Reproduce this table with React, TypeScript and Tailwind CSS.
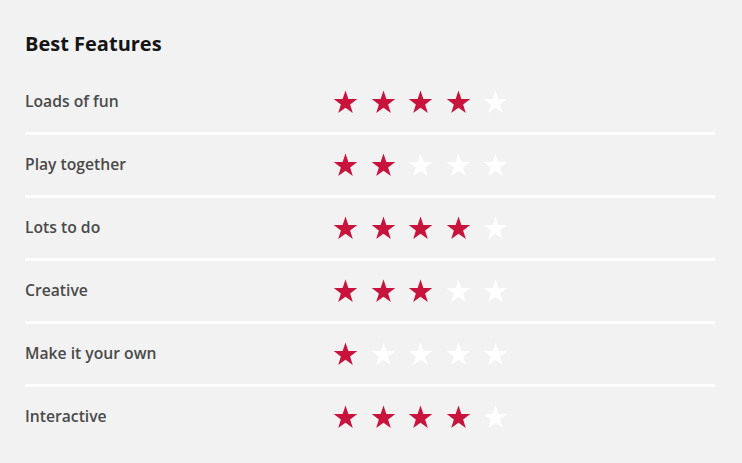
import React from "react";

const rows: [string, number][] = [
  ["Loads of fun", 4],
  ["Play together", 2],
  ["Lots to do", 4],
  ["Creative", 3],
  ["Make it your own", 1],
  ["Interactive", 4],
];

function Star({ filled }: { filled: boolean }) {
  return (
    <svg width="25" height="24" viewBox="0 0 24 23" className={filled ? "text-[#c8143c]" : "text-white"}>
      <path
        fill="currentColor"
        d="M12 0.5 L14.75 8.6 L23.3 8.7 L16.45 13.85 L19 22.1 L12 17.1 L5 22.1 L7.55 13.85 L0.7 8.7 L9.25 8.6 Z"
      />
    </svg>
  );
}

export default function App() {
  return (
    <div className="w-[742px] h-[463px] bg-[#f2f2f2] px-[25px] pt-[32px] font-['Open_Sans',sans-serif]">
      <h2 className="text-[20px] leading-[24px] font-bold text-[#151515] mb-[16px]">Best Features</h2>
      <div className="w-[690px]">
        {rows.map(([label, n], i) => (
          <div key={label}>
            <div className="flex items-center h-[60px]">
              <div className="w-[308px] text-[15.7px] font-semibold text-[#4a4a4a]">{label}</div>
              <div className="flex gap-[12.5px]">
                {[0, 1, 2, 3, 4].map((k) => (
                  <Star key={k} filled={k < n} />
                ))}
              </div>
            </div>
            {i < rows.length - 1 && <div className="h-[3px] bg-white" />}
          </div>
        ))}
      </div>
    </div>
  );
}
